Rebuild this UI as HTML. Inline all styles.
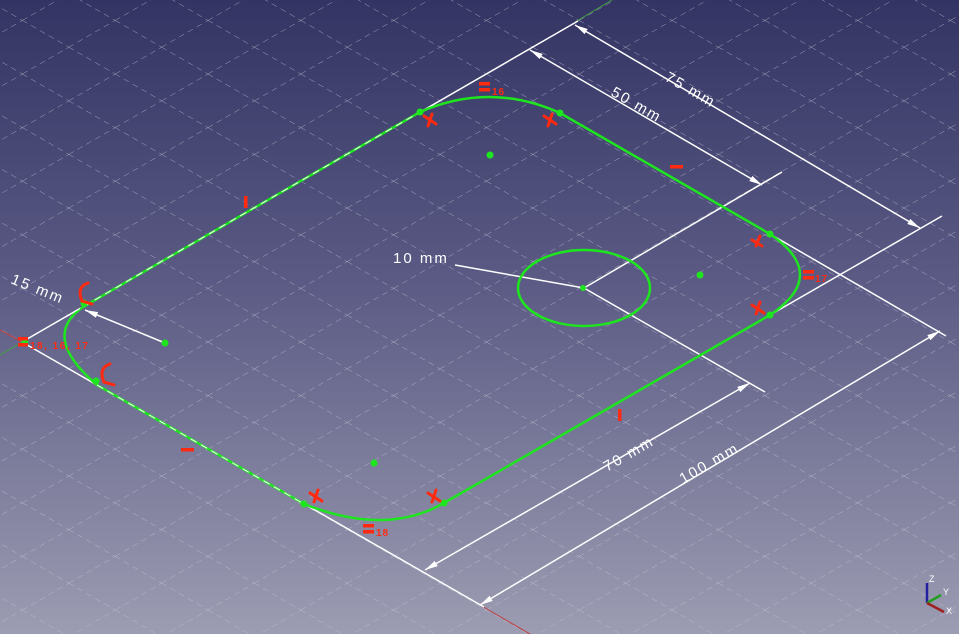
<!DOCTYPE html>
<html><head><meta charset="utf-8"><style>
html,body{margin:0;padding:0;width:959px;height:634px;overflow:hidden}
body{background:linear-gradient(#333463 0%,#5b5b85 45%,#9c9cb2 100%)}
svg{position:absolute;left:0;top:0}
text{font-family:"Liberation Sans",sans-serif}
</style></head><body>
<svg width="959" height="634" viewBox="0 0 959 634">
<defs>
<pattern id="g" patternUnits="userSpaceOnUse" width="1" height="1" patternTransform="matrix(46.4 26.8 46.4 -26.8 22 342)">
<path d="M0 0H1M0 0V1" stroke="#c8c8d8" stroke-opacity="0.75" stroke-width="0.018" stroke-dasharray="0.11 0.08" fill="none"/>
</pattern>
<marker id="a" markerWidth="14" markerHeight="8" refX="13" refY="4" orient="auto-start-reverse" markerUnits="userSpaceOnUse">
<path d="M0 1L13 4L0 7z" fill="#fff"/>
</marker>
</defs>
<rect width="959" height="634" fill="url(#g)"/>
<!-- axes -->
<line x1="0" y1="330" x2="22" y2="342" stroke="#c04040" stroke-width="1"/>
<line x1="480" y1="605" x2="530" y2="634" stroke="#c04040" stroke-width="1"/>
<line x1="22" y1="342" x2="0" y2="355" stroke="#40a040" stroke-width="1"/>
<line x1="575" y1="22" x2="612" y2="0" stroke="#40a040" stroke-width="1"/>
<!-- white dimension lines -->
<g stroke="#fff" stroke-width="1.5" fill="none">
<line x1="22" y1="342" x2="578" y2="21"/>
<line x1="22" y1="342" x2="484" y2="607"/>
<line x1="575" y1="25" x2="920" y2="228" marker-start="url(#a)" marker-end="url(#a)"/>
<line x1="530" y1="50" x2="762" y2="185" marker-start="url(#a)" marker-end="url(#a)"/>
<line x1="584" y1="288" x2="782" y2="172"/>
<line x1="770" y1="315" x2="942" y2="216"/>
<line x1="480" y1="605" x2="940" y2="331" marker-start="url(#a)" marker-end="url(#a)"/>
<line x1="770" y1="234" x2="946" y2="336"/>
<line x1="425" y1="570" x2="750" y2="383" marker-start="url(#a)" marker-end="url(#a)"/>
<line x1="584" y1="288" x2="765" y2="392"/>
<line x1="455" y1="265" x2="584" y2="288"/>
<line x1="165" y1="343" x2="85" y2="310" marker-end="url(#a)"/>
</g>
<g fill="#fff" font-size="15" letter-spacing="2">
<text x="0" y="0" transform="translate(664,80) rotate(30)">75 mm</text>
<text x="0" y="0" transform="translate(610,95) rotate(30)">50 mm</text>
<text x="0" y="0" transform="translate(607,472) rotate(-30)">70 mm</text>
<text x="0" y="0" transform="translate(683,484) rotate(-30)">100 mm</text>
<text x="393" y="263">10 mm</text>
<text x="0" y="0" transform="translate(10,283) rotate(22)">15 mm</text>
</g>
<!-- green sketch -->
<g stroke="#1ee61e" stroke-width="2.5" fill="none">
<path d="M83 307 L420 112 Q490 81.5 560 113 L770 234 Q830 275 770 315 L444 503 Q386 536.5 304 504 L97 385 Q40 336.5 83 307"/>
<ellipse cx="584" cy="288" rx="66" ry="38"/>
</g>
<line x1="22" y1="342" x2="420" y2="112" stroke="#fff" stroke-width="1.2" stroke-dasharray="7 5" opacity="0.85"/>
<line x1="97" y1="385" x2="304" y2="504" stroke="#fff" stroke-width="1.2" stroke-dasharray="7 5" opacity="0.85"/>
<g fill="#1ee61e">
<circle cx="490" cy="155" r="3.5"/><circle cx="700" cy="275" r="3.5"/><circle cx="374" cy="463" r="3.5"/><circle cx="165" cy="343" r="3.5"/><circle cx="583" cy="288" r="3"/>
<circle cx="420" cy="112" r="3.5"/><circle cx="560" cy="113" r="3.5"/><circle cx="770" cy="234" r="3.5"/><circle cx="770" cy="315" r="3.5"/><circle cx="304" cy="504" r="3.5"/><circle cx="444" cy="503" r="3.5"/><circle cx="84" cy="303" r="3.5"/><circle cx="96" cy="381" r="3.5"/><circle cx="25" cy="342" r="3.5"/>
</g>
<!-- red constraints -->
<g fill="#ff2a10">
<rect x="479" y="82" width="11" height="3.5"/><rect x="479" y="88" width="11" height="3.5"/>
<text x="492" y="95" font-size="10" font-weight="bold" letter-spacing="1">16</text>
<rect x="803" y="270" width="11" height="3.5"/><rect x="803" y="276" width="11" height="3.5"/>
<text x="815" y="282" font-size="10" font-weight="bold" letter-spacing="1">17</text>
<rect x="363" y="524" width="11" height="3.5"/><rect x="363" y="530" width="11" height="3.5"/>
<text x="376" y="536" font-size="10" font-weight="bold" letter-spacing="1">18</text>
<rect x="18" y="337" width="10" height="3.5"/><rect x="18" y="343" width="10" height="3.5"/>
<text x="30" y="349" font-size="10" font-weight="bold" letter-spacing="1.5">18, 16, 17</text>
<rect x="244" y="196" width="3.5" height="12"/>
<rect x="670" y="165" width="13" height="3.5"/>
<rect x="618" y="409" width="3.5" height="12"/>
<rect x="181" y="448" width="13" height="3.5"/>
</g>
<g stroke="#ff2a10" stroke-width="3" fill="none" stroke-linecap="round">
<path d="M424 116l12 8M432 114l-4 12"/>
<path d="M544 116l12 8M552 114l-4 12"/>
<path d="M752 240l10 6M760 236l-4 10"/>
<path d="M752 305l12 8M760 302l-4 12"/>
<path d="M310 493l12 8M318 490l-4 12"/>
<path d="M428 493l12 8M436 490l-4 12"/>
<path d="M88 283q-12 4-6 18l10 3"/>
<path d="M110 364q-12 4-6 18l10 3"/>
</g>
<!-- axis indicator -->
<g stroke-width="2.5">
<line x1="927" y1="583" x2="927" y2="603" stroke="#2020a0"/>
<line x1="927" y1="603" x2="941" y2="595" stroke="#20a020"/>
<line x1="927" y1="603" x2="944" y2="612" stroke="#a02020"/>
</g>
<g fill="#fff" font-size="9"><text x="929" y="582">Z</text><text x="943" y="595">Y</text><text x="946" y="614">X</text></g>
</svg>
</body></html>
